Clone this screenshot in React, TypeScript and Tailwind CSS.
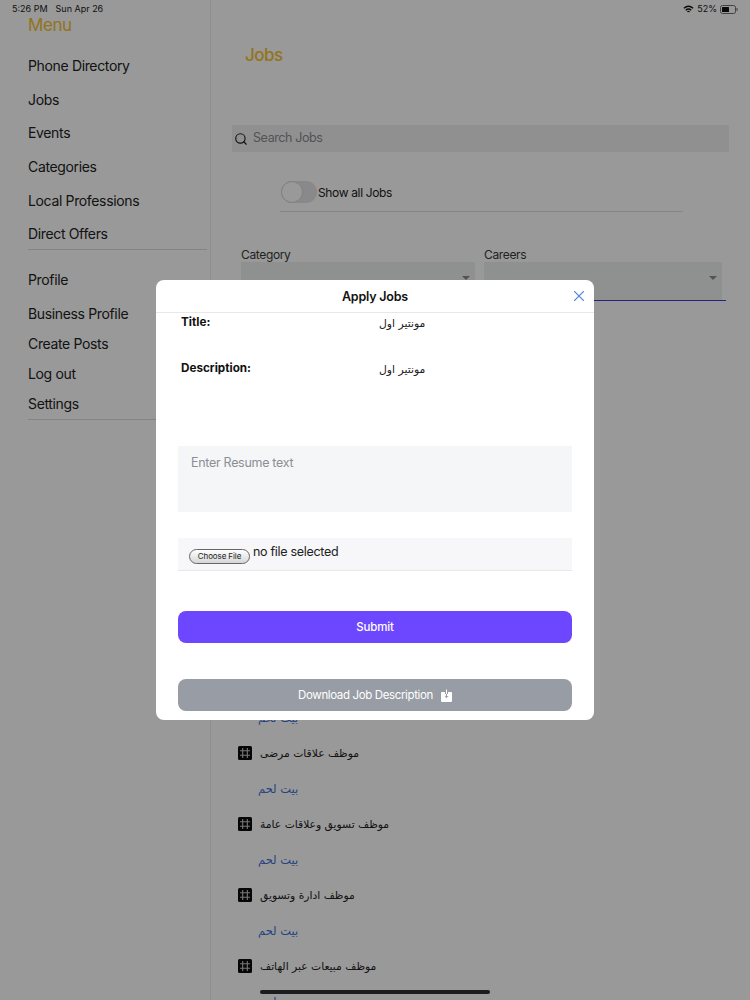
import { Search, X } from 'lucide-react'

const arabicFont = "font-['DejaVu_Sans','Noto_Sans',sans-serif]"

const topLinks = ['Phone Directory', 'Jobs', 'Events', 'Categories', 'Local Professions', 'Direct Offers']
const bottomLinks = ['Business Profile', 'Create Posts', 'Log out', 'Settings']
const jobs = ['موظف علاقات مرضى', 'موظف تسويق وعلاقات عامة', 'موظف ادارة وتسويق', 'موظف مبيعات عبر الهاتف']

const GridIcon = () => (
   <svg width="14" height="14" viewBox="0 0 14 14" className="shrink-0">
      <rect width="14" height="14" rx="1.5" fill="#0b0b0b" />
      <path d="M4.7 2v10M9.300 2v10M2 4.700h10M2 9.300h10" stroke="#c8c8c8" strokeWidth="1.1" />
   </svg>
)

const StatusBar = () => (
   <div className="absolute top-0 left-0 right-0 h-[18px] flex items-center justify-between pl-[12px] pr-[12px] text-[9px] text-[#1a1a1a]">
      <div className="flex gap-[8px]">
         <span>5:26 PM</span>
         <span>Sun Apr 26</span>
      </div>
      <div className="flex items-center gap-[3px]">
         <svg width="11" height="9" viewBox="0 0 24 18" fill="none" stroke="#111" strokeWidth="3">
            <path d="M2 6.500c6-5.500 14-5.500 20 0M6 10.500c3.500-3 8.500-3 12 0M9.500 14c1.500-1 3.500-1 5 0" />
         </svg>
         <span>52%</span>
         <svg width="18" height="9" viewBox="0 0 18 9">
            <rect x="0.500" y="0.500" width="15" height="8" rx="2" fill="none" stroke="#6d6d6d" />
            <rect x="2" y="2" width="7" height="5" rx="0.500" fill="#111" />
            <rect x="16.500" y="3" width="1" height="3" fill="#6d6d6d" />
         </svg>
      </div>
   </div>
)

const Sidebar = () => (
   <aside className="w-[211px] h-full shrink-0 border-r border-[#ededf0] pl-[28px] pr-[3px]">
      <h2 className="pt-[16px] h-[49px] text-[17px] leading-[18px] tracking-[-0.4px] text-[#f2c230]">Menu</h2>
      {topLinks.map((link) => (
         <div key={link} className="h-[33.6px] flex items-center text-[14px] tracking-[-0.35px] text-[#222]">
            {link}
         </div>
      ))}
      <div className="mt-[-2px] border-b border-[#dcdce0]" />
      <div className="mt-[14px] h-[32px] flex items-center text-[14px] tracking-[-0.35px] text-[#222]">Profile</div>
      <div className="mt-[3px]">
         {bottomLinks.map((link) => (
            <div key={link} className="h-[30px] flex items-center text-[14px] tracking-[-0.35px] text-[#222]">
               {link}
            </div>
         ))}
      </div>
      <div className="border-b border-[#dcdce0]" />
   </aside>
)

const SelectBox = ({ label, width }: { label: string; width: string }) => (
   <div className={width}>
      <div className="relative z-10 h-[15px] flex items-center text-[12px] tracking-[-0.35px] text-[#222]">{label}</div>
      <div className="h-[38px] bg-[#eef0f0] relative">
         <span className="absolute right-[5px] top-[14px] w-0 h-0 border-x-[4px] border-x-transparent border-t-[4px] border-t-[#8a8a8a]" />
      </div>
   </div>
)

const JobsPage = () => (
   <main className="flex-1 h-full overflow-hidden">
      <div className="h-[125px] pl-[34px] pt-[44px]">
         <h1 className="text-[17px] leading-[22px] font-medium tracking-[-0.5px] text-[#f2c230]">Jobs</h1>
      </div>
      <div className="ml-[21px] w-[497px] h-[27px] bg-[#f0f1f1] flex items-center pl-[2px] gap-[5px]">
         <Search size={14} strokeWidth={2} className="text-[#222]" />
         <span className="text-[12.5px] tracking-[-0.4px] text-[#8a8a8e]">Search Jobs</span>
      </div>
      <div className="ml-[69px] mt-[20px] w-[403px] h-[40px] border-b border-[#dedee2] flex items-center gap-[1px]">
         <div className="ml-[1px] w-[36px] h-[22px] rounded-full bg-[#e5e5e8] relative">
            <span className="absolute left-0 top-0 w-[22px] h-[22px] rounded-full bg-white border border-[#d6d6d6]" />
         </div>
         <span className="pt-[2px] text-[12px] tracking-[-0.35px] text-[#222]">Show all Jobs</span>
      </div>
      <div className="ml-[30px] mt-[35px] flex gap-[9px]">
         <SelectBox label="Category" width="w-[234px]" />
         <div className="w-[242px] border-b border-[#3a3fd0]">
            <SelectBox label="Careers" width="w-[238px]" />
         </div>
      </div>
      <div className={`ml-[21px] mt-[399px] ${arabicFont}`}>
         <div className="h-[35.5px] pt-[2px] flex items-center pl-[26px] text-[11.5px] text-[#3f6fd8]">
            <span dir="rtl">بيت لحم</span>
         </div>
         {jobs.map((job) => (
            <div key={job}>
               <div className="h-[35.5px] flex items-center gap-[8px] pl-[6px] text-[10.75px] text-[#222]">
                  <GridIcon />
                  <span dir="rtl" className="pt-[2px]">{job}</span>
               </div>
               <div className="h-[35.5px] pt-[2px] flex items-center pl-[26px] text-[11.5px] text-[#3f6fd8]">
                  <span dir="rtl">بيت لحم</span>
               </div>
            </div>
         ))}
      </div>
   </main>
)

const DetailRow = ({ label, className }: { label: string; className: string }) => (
   <div className={`flex pl-[25px] ${className}`}>
      <span className="w-[198px] pt-[1px] text-[11.7px] leading-[16px] font-bold text-[#111]">{label}</span>
      <span dir="rtl" className={`pt-[1px] text-[10.8px] leading-[20px] text-[#222] ${arabicFont}`}>
         مونتير اول
      </span>
   </div>
)

const ApplyModal = () => (
   <div className="w-[438px] h-[440px] bg-white rounded-[8px] overflow-hidden flex flex-col">
      <div className="h-[33px] shrink-0 pt-[2px] border-b border-[#e8e8ea] flex items-center justify-center relative">
         <span className="text-[12.5px] font-semibold tracking-[-0.2px] text-[#111]">Apply Jobs</span>
         <X size={18} strokeWidth={1.5} className="absolute right-[6px] top-[7px] text-[#5a8ad6]" />
      </div>
      <DetailRow label="Title:" className="h-[46px]" />
      <DetailRow label="Description:" className="h-[87px]" />
      <div className="mx-[22px] h-[66px] shrink-0 bg-[#f4f6f8] pl-[13px] pt-[9px] text-[12.5px] leading-[16px] tracking-[-0.3px] text-[#8b8f94]">
         Enter Resume text
      </div>
      <div className="mx-[22px] mt-[26px] h-[33px] shrink-0 bg-[#f7f7f9] border-b border-[#e8e8ea] flex items-start pl-[11px] gap-[3px] pt-[6px]">
         <button className="mt-[5px] w-[61px] h-[15px] rounded-full border border-[#666] bg-linear-to-b from-white to-[#d6d6d6] text-[8px] leading-[13px] tracking-[-0.1px] text-[#222]">
            Choose File
         </button>
         <span className="text-[12.5px] leading-[15px] tracking-[-0.3px] text-[#222]">no file selected</span>
      </div>
      <button className="mx-[22px] mt-[40px] h-[32px] shrink-0 pt-[1px] rounded-[8px] bg-[#6c47ff] text-[11.5px] font-medium tracking-[-0.2px] text-white">
         Submit
      </button>
      <button className="mx-[22px] mt-[36px] h-[32px] shrink-0 rounded-[8px] bg-[#989ca5] text-[11.5px] tracking-[-0.37px] text-white flex items-center justify-center gap-[8px]">
         <span className="pt-[1px]">Download Job Description</span>
         <svg width="11" height="13" viewBox="0 0 11 13">
            <path d="M1 3h3v2h3V3h3a1 1 0 0 1 1 1v8a1 1 0 0 1-1 1H1a1 1 0 0 1-1-1V4a1 1 0 0 1 1-1z" fill="#fff" />
            <path d="M5.500 0.500v7" fill="none" stroke="#fff" strokeWidth="1" />
            <path d="M5.500 5v3.500M3.800 7l1.700 1.700L7.200 7" fill="none" stroke="#989ca5" strokeWidth="1" />
         </svg>
      </button>
   </div>
)

export default function App() {
   return (
      <div className="relative w-[750px] h-[1000px] overflow-hidden bg-white font-['Inter',sans-serif]">
         <div className="flex h-full">
            <Sidebar />
            <JobsPage />
         </div>
         <StatusBar />
         <div className="absolute inset-0 bg-black/40 flex items-center justify-center">
            <ApplyModal />
         </div>
         <div className="absolute left-[260px] top-[990px] w-[230px] h-[4px] rounded-full bg-[#1c1c1e]" />
      </div>
   )
}
